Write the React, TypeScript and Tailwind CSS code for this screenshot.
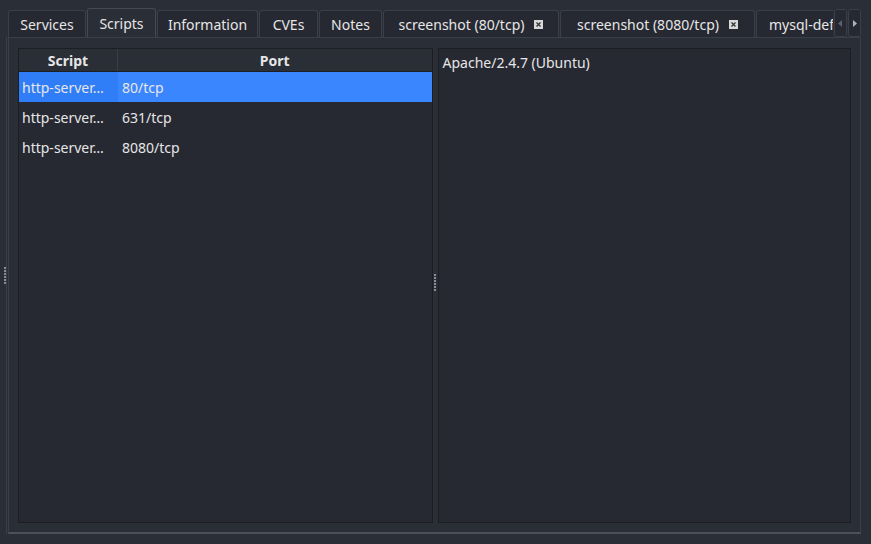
import React from "react"

const tabs = [
  { label: "Services", w: "w-[78px]" },
  { label: "Scripts", w: "w-[69px]", active: true },
  { label: "Information", w: "w-[101px]" },
  { label: "CVEs", w: "w-[59px]" },
  { label: "Notes", w: "w-[63px]" },
  { label: "screenshot (80/tcp)", w: "w-[176px]", close: true },
  { label: "screenshot (8080/tcp)", w: "w-[195px]", close: true },
  { label: "mysql-default", w: "w-[110px]" },
]

const rows = [
  { script: "http-server…", port: "80/tcp" },
  { script: "http-server…", port: "631/tcp" },
  { script: "http-server…", port: "8080/tcp" },
]

function CloseBox() {
  return (
    <span className="ml-[10px] w-[9px] h-[9px] bg-[#d8d8d8] flex items-center justify-center">
      <svg width="7" height="7" viewBox="0 0 7 7">
        <path d="M1.5 1.5 L5.5 5.5 M5.5 1.5 L1.5 5.5" stroke="#333" strokeWidth="1.3" />
      </svg>
    </span>
  )
}

function Dots({ className }: { className: string }) {
  return (
    <div className={"flex flex-col gap-[1px] " + className}>
      {[0, 1, 2, 3, 4, 5].map((i) => (
        <span key={i} className="w-[2px] h-[2px] bg-[#8a8e98]" />
      ))}
    </div>
  )
}

export default function App() {
  return (
    <div className="w-[871px] h-[544px] bg-[#2a2e37] flex text-[#e6e6e6] text-[14px] overflow-hidden" style={{ fontFamily: '"Noto Sans", sans-serif' }}>
      <div className="w-[8px] pt-[37px] pb-[10px] flex">
        <div className="w-[7px] h-full border-r border-[#3b3f49] flex items-center justify-end">
          <Dots className="mb-[20px]" />
        </div>
      </div>
      <div className="w-[853px] flex flex-col pt-[8px] pb-[10px]">
        <div className="h-[29px] flex items-end relative overflow-hidden">
          <div className="flex items-end gap-[1px] w-[825px] overflow-hidden">
            {tabs.map((t) => (
              <div
                key={t.label}
                className={
                  "shrink-0 flex items-center border border-b-0 rounded-t-[3px] " +
                  t.w +
                  (t.active
                    ? " h-[29px] bg-[#2a2e37] border-[#454954]"
                    : " h-[27px] bg-[#262932] border-[#3b3f49]") +
                  (t.label === "mysql-default" ? " justify-start pl-[12px]" : " justify-center")
                }
              >
                <span className="whitespace-nowrap">{t.label}</span>
                {t.close && <CloseBox />}
              </div>
            ))}
          </div>
          <div className="absolute right-0 top-[1px] flex gap-[1px] bg-[#2a2e37]">
            <div className="w-[13px] h-[28px] border border-[#3b3f49] rounded-[3px] bg-[#262932] flex items-center justify-center">
              <svg width="5" height="7" viewBox="0 0 5 7"><path d="M4 0 L0 3.5 L4 7 Z" fill="#5c606a" /></svg>
            </div>
            <div className="w-[13px] h-[28px] border border-[#3b3f49] rounded-[3px] bg-[#262932] flex items-center justify-center">
              <svg width="5" height="7" viewBox="0 0 5 7"><path d="M1 0 L5 3.5 L1 7 Z" fill="#b0b4bc" /></svg>
            </div>
          </div>
        </div>
        <div className="flex-1 border border-[#3b3f49] border-b-[#4c505a] border-b-2 px-[9px] pt-[10px] pb-[9px] flex">
          <div className="w-[415px] h-full border border-[#1c1e24] bg-[#262932] flex flex-col">
            <div className="h-[23px] flex font-bold bg-[#2a2e37] border-b border-[#1c1e24]">
              <div className="w-[99px] border-r border-[#3b3f49] flex items-center justify-center">Script</div>
              <div className="flex-1 flex items-center justify-center">Port</div>
            </div>
            {rows.map((r, i) => (
              <div key={i} className={"h-[30px] flex items-center " + (i === 0 ? "bg-[#3a86ff]" : "")}>
                <div className={"w-[99px] h-full flex items-center pl-[3px] " + (i === 0 ? "bg-[#2f7ef7]" : "")}>{r.script}</div>
                <div className="pl-[4px]">{r.port}</div>
              </div>
            ))}
          </div>
          <div className="w-[5px] h-full flex items-center justify-center">
            <Dots className="mt-[-6px]" />
          </div>
          <div className="w-[414px] h-full border border-[#1c1e24] bg-[#262932] px-[4px] pt-[3px]">
            <div>Apache/2.4.7 (Ubuntu)</div>
          </div>
        </div>
      </div>
    </div>
  )
}
